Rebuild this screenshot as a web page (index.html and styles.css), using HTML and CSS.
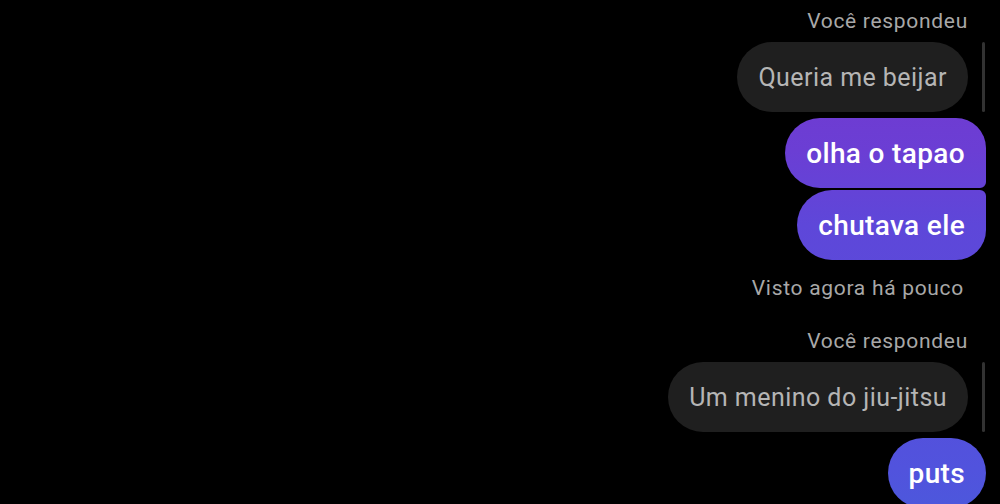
FILE: index.html
```html
<!DOCTYPE html>
<html lang="pt-BR">
<head>
  <meta charset="UTF-8">
  <meta name="viewport" content="width=device-width, initial-scale=1.0">
  <title>Conversa</title>
  <link rel="stylesheet" href="styles.css">
</head>
<body>
  <div class="thread">

    <!-- Resposta 1 -->
    <p class="label first">Você respondeu</p>
    <div class="reply-row">
      <div class="bubble reply">Queria me beijar</div>
      <span class="reply-bar"></span>
    </div>

    <div class="bubble sent top">olha o tapao</div>
    <div class="bubble sent bottom">chutava ele</div>

    <p class="label seen">Visto agora há pouco</p>

    <!-- Resposta 2 -->
    <p class="label again">Você respondeu</p>
    <div class="reply-row">
      <div class="bubble reply">Um menino do jiu-jitsu</div>
      <span class="reply-bar"></span>
    </div>

    <div class="bubble sent single">puts</div>

  </div>
</body>
</html>
```

FILE: styles.css
```css
* {
  margin: 0;
  padding: 0;
  box-sizing: border-box;
}

html, body {
  background: #000;
  height: 100%;
  overflow: hidden;
}

body {
  font-family: Roboto, "Noto Sans", sans-serif;
}

/* Message column */
.thread {
  display: flex;
  flex-direction: column;
  align-items: flex-end;
  padding-right: 14px;
}

.label {
  font-size: 21px;
  line-height: 24px;
  letter-spacing: 0.7px;
  color: #a8a8a8;
  margin-right: 18px;
}

.label.first {
  margin-top: 9px;
}

.label.seen {
  margin-top: 16px;
  margin-right: 22px;
}

.label.again {
  margin-top: 29px;
}

/* Bubbles */
.bubble {
  height: 70px;
  display: flex;
  align-items: center;
  padding: 0 21px;
  border-radius: 35px;
  white-space: nowrap;
}

.reply-row {
  display: flex;
  align-items: stretch;
  margin-top: 9px;
}

.reply {
  background: #1f1f1f;
  color: #b5b5b5;
  font-size: 25px;
  letter-spacing: 0.45px;
}

.reply-bar {
  width: 3px;
  margin-left: 14px;
  margin-right: 1px;
  background: #323232;
  border-radius: 2px;
}

.sent {
  color: #fff;
  font-size: 28px;
  font-weight: 500;
  letter-spacing: 0.35px;
  background: linear-gradient(to bottom, #7636cc 0, #6b3ed4 150px, #5e47d9 225px, #5153dd 470px, #4d57dc 504px);
  background-attachment: fixed;
}

.sent.top {
  margin-top: 6px;
  border-radius: 35px 30px 6px 35px;
}

.sent.bottom {
  margin-top: 2px;
  border-radius: 35px 6px 30px 35px;
}

.sent.single {
  margin-top: 6px;
}
```
